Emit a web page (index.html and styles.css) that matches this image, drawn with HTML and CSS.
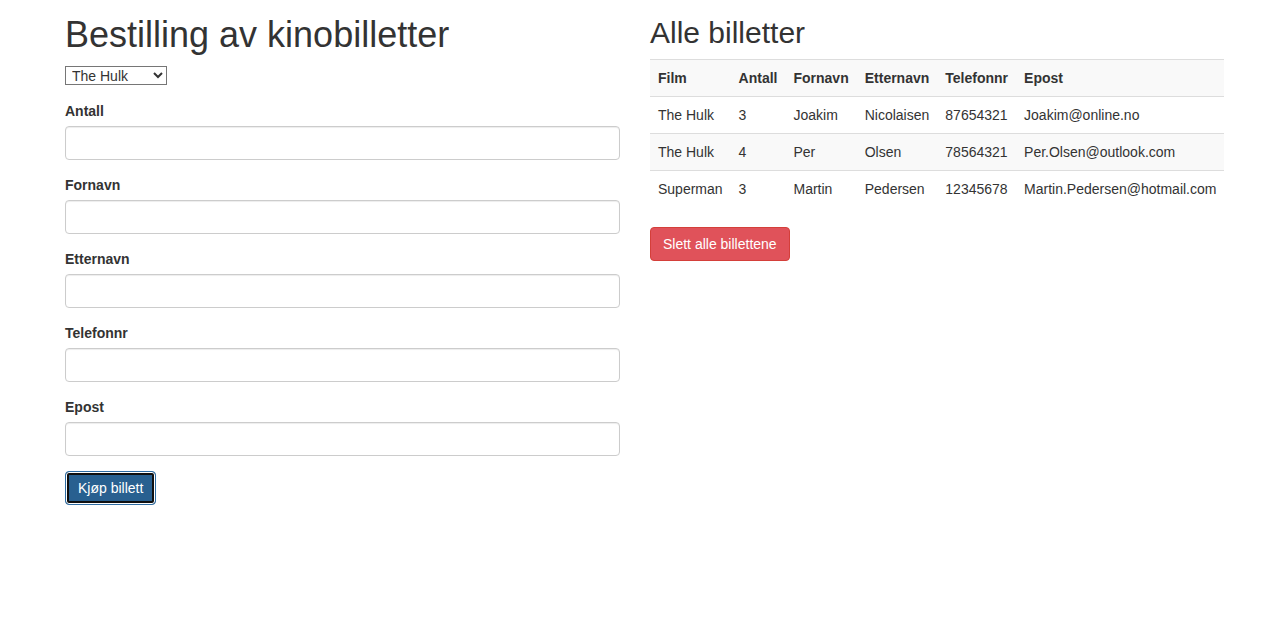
FILE: index.html
```html
<!DOCTYPE html>
<html lang="no">
<head>
<meta charset="utf-8">
<title>Kinobilletter</title>
<link rel="stylesheet" href="styles.css">
</head>
<body>
<div class="page">
  <div class="col col-left">
    <h1 class="title">Bestilling av kinobilletter</h1>
    <select class="film-select">
      <option>The Hulk</option>
      <option>Superman</option>
    </select>
    <form class="form">
      <div class="form-group">
        <label class="label">Antall</label>
        <input class="input" type="text">
      </div>
      <div class="form-group">
        <label class="label">Fornavn</label>
        <input class="input" type="text">
      </div>
      <div class="form-group">
        <label class="label">Etternavn</label>
        <input class="input" type="text">
      </div>
      <div class="form-group">
        <label class="label">Telefonnr</label>
        <input class="input" type="text">
      </div>
      <div class="form-group">
        <label class="label">Epost</label>
        <input class="input" type="text">
      </div>
      <button type="button" class="btn btn-primary btn-focus">Kjøp billett</button>
    </form>
  </div>
  <div class="col col-right">
    <h2 class="subtitle">Alle billetter</h2>
    <table class="table">
      <tbody>
        <tr><th>Film</th><th>Antall</th><th>Fornavn</th><th>Etternavn</th><th>Telefonnr</th><th>Epost</th></tr>
        <tr><td>The Hulk</td><td>3</td><td>Joakim</td><td>Nicolaisen</td><td>87654321</td><td>Joakim@online.no</td></tr>
        <tr><td>The Hulk</td><td>4</td><td>Per</td><td>Olsen</td><td>78564321</td><td>Per.Olsen@outlook.com</td></tr>
        <tr><td>Superman</td><td>3</td><td>Martin</td><td>Pedersen</td><td>12345678</td><td>Martin.Pedersen@hotmail.com</td></tr>
      </tbody>
    </table>
    <button type="button" class="btn btn-danger">Slett alle billettene</button>
  </div>
</div>
</body>
</html>
```

FILE: styles.css
```css
* { box-sizing: border-box; }
html, body { margin: 0; padding: 0; background: #fff; }
body {
  font-family: "Liberation Sans", Arial, Helvetica, sans-serif;
  font-size: 14px;
  line-height: 1.42857143;
  color: #333;
}
.page {
  display: flex;
  gap: 30px;
  padding-left: 65px;
}
.col { width: 555px; flex: none; }
.title {
  font-size: 36px;
  font-weight: 500;
  line-height: 1.1;
  margin: 15px 0 11px;
}
.subtitle {
  font-size: 30px;
  font-weight: 500;
  line-height: 1.1;
  margin: 16px 0 10px;
}
.film-select {
  font: inherit;
  font-size: 14px;
  color: #333;
  width: 102px;
  height: 19px;
  border: 1px solid #767676;
  border-radius: 0;
  background: #fff;
  padding: 0 0 0 2px;
  margin: 0;
  display: block;
}
.form { margin-top: 16px; }
.form-group { margin-bottom: 15px; }
.label {
  display: block;
  font-weight: 700;
  margin-bottom: 5px;
  max-width: 100%;
}
.input {
  display: block;
  width: 100%;
  height: 34px;
  padding: 6px 12px;
  font: inherit;
  color: #555;
  background: #fff;
  border: 1px solid #ccc;
  border-radius: 4px;
  box-shadow: inset 0 1px 1px rgba(0,0,0,.075);
  margin: 0;
}
.btn {
  display: inline-block;
  font: inherit;
  font-size: 14px;
  line-height: 1.42857143;
  padding: 6px 12px;
  border: 1px solid transparent;
  border-radius: 4px;
  margin: 0;
  cursor: pointer;
  white-space: nowrap;
}
.btn-primary {
  color: #fff;
  background: #286090;
  border-color: #2e6da4;
}
.btn-focus {
  box-shadow: inset 0 0 0 1px #fff, inset 0 0 0 3px #101010;
}
.btn-danger {
  color: #fff;
  background: #e0525a;
  border-color: #d43f3a;
}
.table {
  min-width: 100%;
  border-collapse: collapse;
  border-spacing: 0;
  margin-bottom: 20px;
}
.table th, .table td {
  padding: 8px;
  line-height: 1.42857143;
  text-align: left;
  vertical-align: top;
  border-top: 1px solid #ddd;
  white-space: nowrap;
}
.table th { font-weight: 700; }
.table tr:nth-child(odd) { background: #f9f9f9; }
```
